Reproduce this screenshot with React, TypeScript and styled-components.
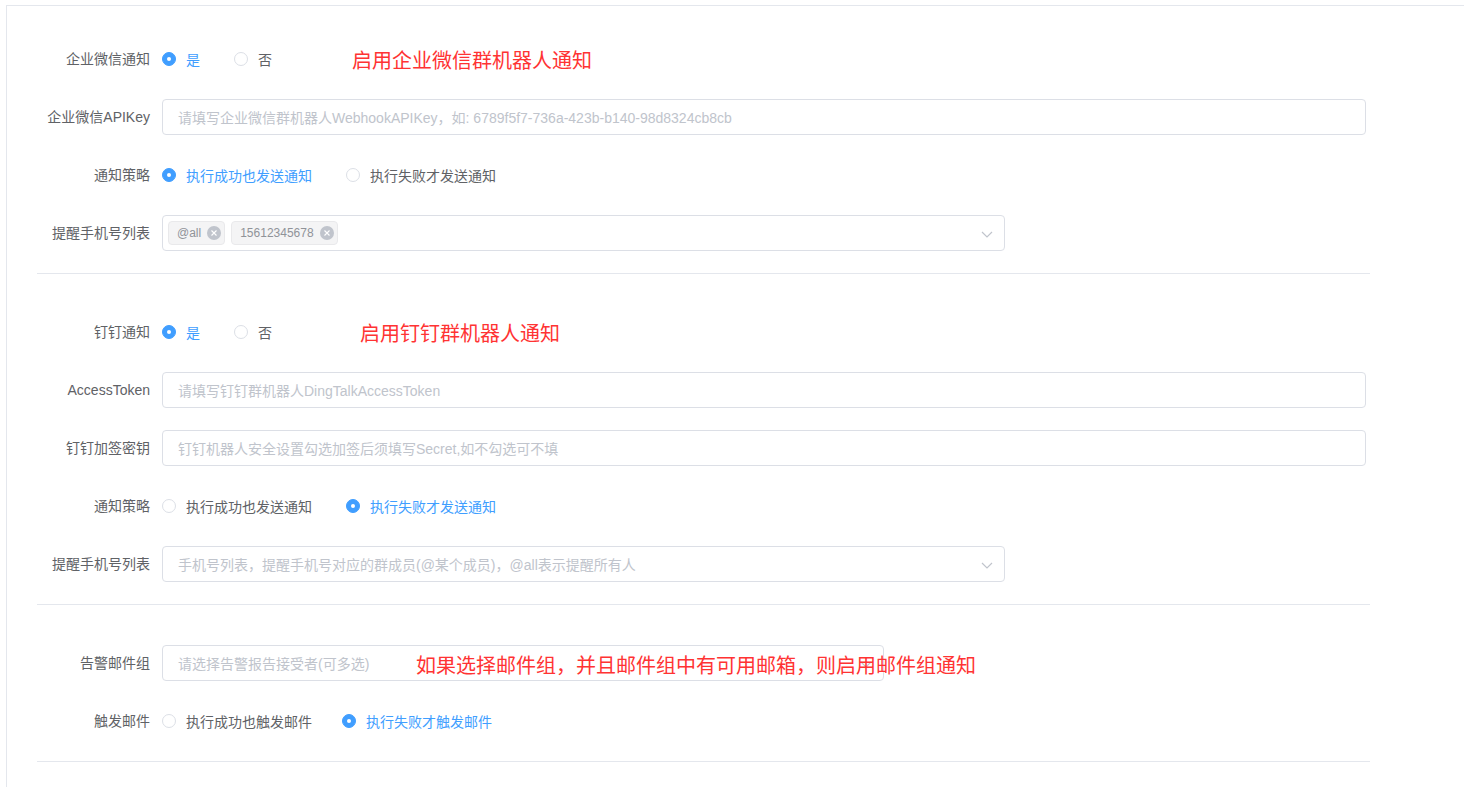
import { FC } from 'react';
import styled, { createGlobalStyle } from 'styled-components';

const GlobalStyle = createGlobalStyle`
    html, body {
        margin: 0;
        padding: 0;
        background: #fff;
        overflow: hidden;
    }
    body {
        font-family: "Liberation Sans", "Noto Sans CJK SC", sans-serif;
        font-size: 14px;
        color: #606266;
    }
`;

const Panel = styled.div`
    margin: 5px 0 0 6px;
    border-top: 1px solid #e4e7ed;
    border-left: 1px solid #e4e7ed;
    padding: 35px 0 0 30px;
    height: 800px;
    box-sizing: border-box;
`;

const Form = styled.div`
    width: 1333px;
`;

const Item = styled.div`
    position: relative;
    display: flex;
    align-items: center;
    height: 36px;
    margin-bottom: 22px;
`;

const Label = styled.label`
    width: 125px;
    flex: none;
    box-sizing: border-box;
    padding-right: 12px;
    text-align: right;
    font-size: 14px;
    color: #606266;
    line-height: 36px;
`;

const Input = styled.div<{ $w: number }>`
    width: ${(p) => p.$w}px;
    height: 36px;
    box-sizing: border-box;
    border: 1px solid #dcdfe6;
    border-radius: 4px;
    padding: 0 15px;
    display: flex;
    align-items: center;
    font-size: 14px;
    color: #c0c4cc;
    white-space: nowrap;
    overflow: hidden;
`;

const Select = styled(Input)`
    position: relative;
    padding: 0 30px 0 5px;
    gap: 6px;
    .ph {
        padding-left: 10px;
    }
    .arrow {
        position: absolute;
        right: 10px;
        top: 11px;
    }
`;

const Tag = styled.span`
    display: inline-flex;
    align-items: center;
    height: 24px;
    box-sizing: border-box;
    padding: 0 3px 0 8px;
    background: #f4f4f5;
    border: 1px solid #e9e9eb;
    border-radius: 4px;
    font-size: 12px;
    color: #909399;
    gap: 6px;
    .close {
        width: 14px;
        height: 14px;
        border-radius: 50%;
        background: #c0c4cc;
        display: inline-flex;
        align-items: center;
        justify-content: center;
    }
`;

const RadioGroup = styled.div<{ $gap: number }>`
    display: flex;
    align-items: center;
    gap: ${(p) => p.$gap}px;
`;

const RadioOpt = styled.span<{ $on?: boolean }>`
    display: inline-flex;
    align-items: center;
    font-size: 14px;
    color: ${(p) => (p.$on ? '#409eff' : '#606266')};
    .dot {
        width: 14px;
        height: 14px;
        box-sizing: border-box;
        border-radius: 50%;
        margin-right: 10px;
        border: 1px solid ${(p) => (p.$on ? '#409eff' : '#dcdfe6')};
        background: ${(p) => (p.$on ? '#409eff' : '#fff')};
        display: inline-flex;
        align-items: center;
        justify-content: center;
    }
    .dot::after {
        content: '';
        width: 4px;
        height: 4px;
        border-radius: 50%;
        background: #fff;
        display: ${(p) => (p.$on ? 'block' : 'none')};
    }
`;

const Note = styled.span<{ $ml: number }>`
    margin-left: ${(p) => p.$ml}px;
    font-size: 20px;
    color: #f33;
    white-space: nowrap;
`;

const FloatNote = styled.span`
    position: absolute;
    left: 379px;
    top: 5px;
    font-size: 20px;
    color: #f33;
    white-space: nowrap;
`;

const Divider = styled.div`
    height: 1px;
    background: #e4e7ed;
    margin-bottom: 40px;
`;

const Arrow: FC = () => (
    <svg className="arrow" width="14" height="14" viewBox="0 0 14 14">
        <path d="M2 5 L7 10 L12 5" fill="none" stroke="#c0c4cc" strokeWidth="1.2" />
    </svg>
);

const CloseX: FC = () => (
    <span className="close">
        <svg width="8" height="8" viewBox="0 0 8 8">
            <path d="M1.5 1.5 L6.5 6.5 M6.5 1.5 L1.5 6.5" stroke="#fff" strokeWidth="1.1" />
        </svg>
    </span>
);

interface RadioProps {
    options: string[];
    value: number;
    gap: number;
}

const Radios: FC<RadioProps> = ({ options, value, gap }) => (
    <RadioGroup $gap={gap}>
        {options.map((o, i) => (
            <RadioOpt key={o} $on={i === value}>
                <span className="dot" />
                {o}
            </RadioOpt>
        ))}
    </RadioGroup>
);

const App: FC = () => {
    return (
        <>
            <GlobalStyle />
            <Panel>
                <Form>
                    <Item>
                        <Label>企业微信通知</Label>
                        <Radios options={['是', '否']} value={0} gap={34} />
                        <Note $ml={80}>启用企业微信群机器人通知</Note>
                    </Item>
                    <Item>
                        <Label>企业微信APIKey</Label>
                        <Input $w={1204}>
                            请填写企业微信群机器人WebhookAPIKey，如: 6789f5f7-736a-423b-b140-98d8324cb8cb
                        </Input>
                    </Item>
                    <Item>
                        <Label>通知策略</Label>
                        <Radios options={['执行成功也发送通知', '执行失败才发送通知']} value={0} gap={34} />
                    </Item>
                    <Item>
                        <Label>提醒手机号列表</Label>
                        <Select $w={843}>
                            <Tag>
                                @all
                                <CloseX />
                            </Tag>
                            <Tag>
                                15612345678
                                <CloseX />
                            </Tag>
                            <Arrow />
                        </Select>
                    </Item>
                    <Divider />

                    <Item>
                        <Label>钉钉通知</Label>
                        <Radios options={['是', '否']} value={0} gap={34} />
                        <Note $ml={88}>启用钉钉群机器人通知</Note>
                    </Item>
                    <Item>
                        <Label>AccessToken</Label>
                        <Input $w={1204}>请填写钉钉群机器人DingTalkAccessToken</Input>
                    </Item>
                    <Item>
                        <Label>钉钉加签密钥</Label>
                        <Input $w={1204}>钉钉机器人安全设置勾选加签后须填写Secret,如不勾选可不填</Input>
                    </Item>
                    <Item>
                        <Label>通知策略</Label>
                        <Radios options={['执行成功也发送通知', '执行失败才发送通知']} value={1} gap={34} />
                    </Item>
                    <Item>
                        <Label>提醒手机号列表</Label>
                        <Select $w={843}>
                            <span className="ph">
                                手机号列表，提醒手机号对应的群成员(@某个成员)，@all表示提醒所有人
                            </span>
                            <Arrow />
                        </Select>
                    </Item>
                    <Divider />

                    <Item>
                        <Label>告警邮件组</Label>
                        <Select $w={722}>
                            <span className="ph">请选择告警报告接受者(可多选)</span>
                            <Arrow />
                        </Select>
                        <FloatNote>如果选择邮件组，并且邮件组中有可用邮箱，则启用邮件组通知</FloatNote>
                    </Item>
                    <Item>
                        <Label>触发邮件</Label>
                        <Radios options={['执行成功也触发邮件', '执行失败才触发邮件']} value={1} gap={30} />
                    </Item>
                    <Divider />
                </Form>
            </Panel>
        </>
    );
};

export default App;
